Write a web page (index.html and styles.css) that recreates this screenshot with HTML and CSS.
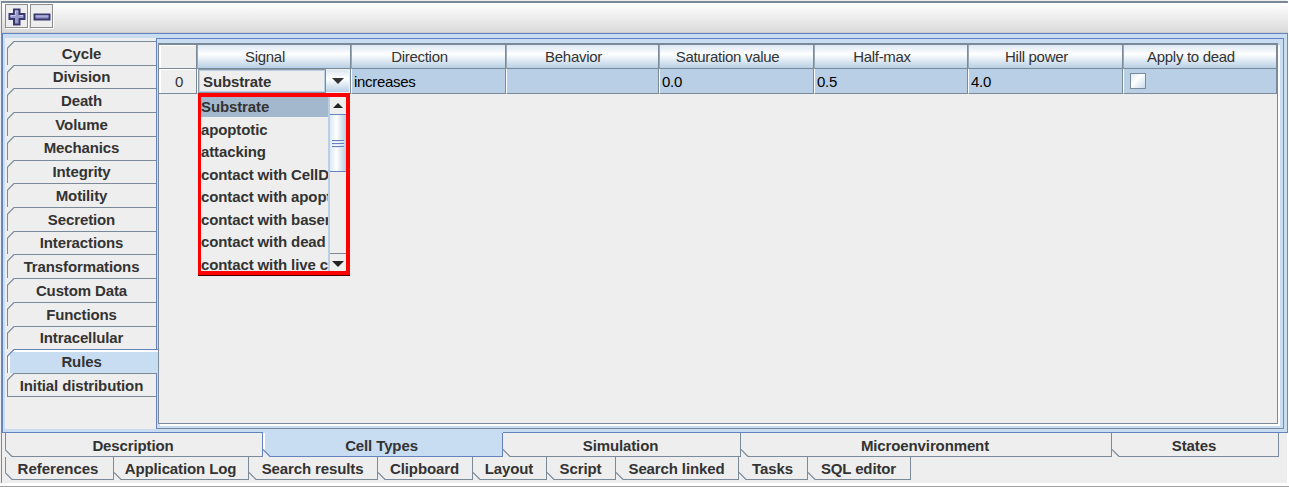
FILE: index.html
```html
<!DOCTYPE html>
<html lang="en">
<head>
<meta charset="utf-8">
<title>Cell Types</title>
<link rel="stylesheet" href="styles.css">
</head>
<body>
<svg class="defs" width="0" height="0">
  <symbol id="cut-top" viewBox="0 0 8 8"><path d="M0 0H8L0 8Z" fill="#eee"/><path d="M8 .5H7L.5 7V8" fill="none" stroke="currentColor" stroke-width="1.2"/></symbol>
  <symbol id="cut-bottom" viewBox="0 0 8 8"><path d="M0 0L8 8H0Z" fill="#eee"/><path d="M0 .5L7 7.5H8" fill="none" stroke="currentColor" stroke-width="1.2"/></symbol>
</svg>
<div class="window">
  <header class="toolbar">
    <button class="tool"><svg width="18" height="18" viewBox="0 0 18 18"><path d="M6 1.5h5.5v4.5h5v5h-5v5.500H6V11H1.500V6H6z" fill="#9a9bcb" stroke="#38386f" stroke-width="2"/><path d="M7.500 6.500V3h2.500M3 9V7.500h4.500M12 7.500h3" fill="none" stroke="#c9caf5" stroke-width="1.2"/></svg></button>
    <button class="tool"><svg width="18" height="18" viewBox="0 0 18 18"><path d="M1.500 6.500h15v5h-15z" fill="#8f90c0" stroke="#38386f" stroke-width="2"/><path d="M2.500 8h13" fill="none" stroke="#c0c1ee" stroke-width="1.2"/></svg></button>
  </header>
  <main class="pane">
    <nav class="side">
      <div class="stab"><svg><use href="#cut-top"/></svg>Cycle</div>
      <div class="stab"><svg><use href="#cut-top"/></svg>Division</div>
      <div class="stab"><svg><use href="#cut-top"/></svg>Death</div>
      <div class="stab"><svg><use href="#cut-top"/></svg>Volume</div>
      <div class="stab"><svg><use href="#cut-top"/></svg>Mechanics</div>
      <div class="stab"><svg><use href="#cut-top"/></svg>Integrity</div>
      <div class="stab"><svg><use href="#cut-top"/></svg>Motility</div>
      <div class="stab"><svg><use href="#cut-top"/></svg>Secretion</div>
      <div class="stab"><svg><use href="#cut-top"/></svg>Interactions</div>
      <div class="stab"><svg><use href="#cut-top"/></svg>Transformations</div>
      <div class="stab"><svg><use href="#cut-top"/></svg>Custom Data</div>
      <div class="stab"><svg><use href="#cut-top"/></svg>Functions</div>
      <div class="stab"><svg><use href="#cut-top"/></svg>Intracellular</div>
      <div class="stab active"><svg><use href="#cut-top"/></svg>Rules</div>
      <div class="stab"><svg><use href="#cut-top"/></svg>Initial distribution</div>
    </nav>
    <section class="content">
      <div class="scroll">
        <div class="grid head">
          <div class="corner"></div><div class="th">Signal</div><div class="th">Direction</div><div class="th">Behavior</div><div class="th">Saturation value</div><div class="th">Half-max</div><div class="th">Hill power</div><div class="th">Apply to dead</div>
        </div>
        <div class="grid row">
          <div class="corner num">0</div>
          <div class="td combo"><span class="value">Substrate</span><span class="arrow"><svg width="12" height="6" viewBox="0 0 12 6"><path d="M0 0H12L6 6Z" fill="#333"/></svg></span>
            <div class="popup">
              <ul class="list">
                <li class="sel">Substrate</li><li>apoptotic</li><li>attacking</li><li>contact with CellD</li><li>contact with apopt</li><li>contact with basem</li><li>contact with dead</li><li>contact with live c</li>
              </ul>
              <div class="bar">
                <div class="step up"><svg width="10" height="5" viewBox="0 0 10 5"><path d="M5 0L10 5H0Z" fill="#222"/></svg></div>
                <div class="thumb"><i></i><i></i><i></i></div>
                <div class="step down"><svg width="12" height="6" viewBox="0 0 12 6"><path d="M0 0H12L6 6Z" fill="#222"/></svg></div>
              </div>
            </div>
          </div>
          <div class="td">increases</div><div class="td"></div><div class="td">0.0</div><div class="td">0.5</div><div class="td">4.0</div><div class="td"><span class="check"></span></div>
        </div>
      </div>
    </section>
  </main>
  <nav class="tabs main-tabs">
    <div class="tab"><svg><use href="#cut-bottom"/></svg>Description</div>
    <div class="tab active"><svg><use href="#cut-bottom"/></svg>Cell Types</div>
    <div class="tab"><svg><use href="#cut-bottom"/></svg>Simulation</div>
    <div class="tab"><svg><use href="#cut-bottom"/></svg>Microenvironment</div>
    <div class="tab"><svg><use href="#cut-bottom"/></svg>States</div>
  </nav>
  <nav class="tabs sub-tabs">
    <div class="tab"><svg><use href="#cut-bottom"/></svg>References</div>
    <div class="tab"><svg><use href="#cut-bottom"/></svg>Application Log</div>
    <div class="tab"><svg><use href="#cut-bottom"/></svg>Search results</div>
    <div class="tab"><svg><use href="#cut-bottom"/></svg>Clipboard</div>
    <div class="tab"><svg><use href="#cut-bottom"/></svg>Layout</div>
    <div class="tab"><svg><use href="#cut-bottom"/></svg>Script</div>
    <div class="tab"><svg><use href="#cut-bottom"/></svg>Search linked</div>
    <div class="tab"><svg><use href="#cut-bottom"/></svg>Tasks</div>
    <div class="tab"><svg><use href="#cut-bottom"/></svg>SQL editor</div>
  </nav>
</div>
</body>
</html>
```
FILE: styles.css
```css
* { box-sizing: border-box; }
body {
  margin: 0;
  width: 1289px;
  height: 487px;
  overflow: hidden;
  display: flex;
  flex-direction: column;
  padding-top: 1px;
  background: #eee;
  border-bottom: 1px solid #a0a0a0;
  font: bold 15px/17px "Liberation Sans", Arial, sans-serif;
  letter-spacing: -0.12px;
  color: #333;
  box-shadow: inset 0 -3px #fff, inset -2px 0 #fff;
}
.defs { position: absolute; }
.window {
  width: 1287px;
  height: 482px;
  border-top: 2px solid #7a8a99;
  border-left: 1px solid #7a8a99;
  margin-left: 1px;
}
.toolbar {
  height: 30px;
  display: flex;
  gap: 2px;
  padding: 1px 0 0 3px;
  background: linear-gradient(#fff, #dadada);
  border-bottom: 1px solid #ccc;
}
.tool {
  width: 23px;
  height: 24px;
  padding: 1px 0 0 1px;
  display: flex;
  align-items: center;
  justify-content: center;
  background: #eee;
  border: 1px solid #8c8c8c;
  box-shadow: 1px 1px #fff;
}
.pane {
  height: 400px;
  display: flex;
  background: #c8ddf2;
  border: 1px solid #6382bf;
  border-right-color: #7a8a99;
  padding: 4px 3px 3px 2px;
}
.side {
  width: 151px;
  padding: 3px 0 0 2px;
  background: #eee;
}
.stab {
  position: relative;
  height: 23.72px;
  padding-top: 2.6px;
  padding-right: 1px;
  text-align: center;
  border-left: 1px solid #7a8a99;
  border-top: 1px solid #7a8a99;
  color: #333;
}
.stab:last-child { border-bottom: 1px solid #7a8a99; height: 24.2px; }
.stab svg {
  position: absolute;
  left: -1px;
  top: -1px;
  width: 8px;
  height: 8px;
  color: #7a8a99;
}
.stab.active {
  background: #c8ddf2;
  border-top-color: #6382bf;
  box-shadow: inset 2px 2px #fff;
  margin-right: -2px;
  padding-right: 3px;
  z-index: 1;
}
.stab.active svg { color: #6382bf; }
.content {
  flex: 1;
  border: 1px solid #7a8a99;
  border-left-color: #6382bf;
  border-top-color: #6382bf;
  padding: 4px 2px 2px 1px;
}
.scroll {
  height: 381px;
  background: #eee;
  border: 1px solid #7a8a99;
  border-top-width: 2px;
  box-shadow: 2px 2px #fff;
  margin: 0 3px 2px 0;
}
.grid {
  display: grid;
  grid-template-columns: 38px 154px 155px 153px 155px 154px 155px 154px;
  height: 24px;
  font-weight: normal;
  letter-spacing: -0.3px;
}
.row { height: 25px; }
.grid > div {
  border-bottom: 1px solid #7a8a99;
  border-right: 1px solid #7a8a99;
}
.th {
  padding: 3px 18px 0 0;
  text-align: center;
  border-left: 1px solid #9aa8b5;
  background: linear-gradient(#dde8f3, #fff 40%, #b8cfe5);
}
.corner {
  background: #eee;
  box-shadow: inset 2px 1px #fff;
}
.num {
  padding: 4px 0 0 3px;
  text-align: center;
}
.td {
  background: #b8cfe5;
  border-left: 1px solid #fff;
  padding: 4px 0 0 2px;
  color: #000;
}
.combo {
  position: relative;
  display: flex;
  padding: 1px;
  background: #eee;
  font-weight: bold;
  letter-spacing: -0.12px;
  color: #333;
}
.value {
  width: 126px;
  border: 1px solid #b8cfe5;
  outline: 1px solid #8a99a8;
  outline-offset: 0;
  padding: 2px 0 0 3px;
}
.arrow {
  flex: 1;
  display: flex;
  align-items: center;
  justify-content: center;
  border-left: 1px solid #7a8a99;
  background: linear-gradient(#dde8f3, #fff 40%, #b8cfe5);
}
.popup {
  position: absolute;
  left: 0;
  top: 24px;
  width: 152px;
  height: 182px;
  border: 4px solid #f00;
  border-left-width: 3px;
  box-shadow: 0 1px #400;
  display: flex;
  background: #eee;
  z-index: 2;
}
.list {
  list-style: none;
  margin: 0;
  padding: 0;
  width: 127px;
  overflow: hidden;
  white-space: nowrap;
}
.list li { height: 22.5px; padding-top: 2px; }
.list .sel { background: #a3b8cc; height: 20px; padding-top: 1px; margin-bottom: 1.5px; }
.bar {
  flex: 1;
  display: flex;
  flex-direction: column;
  border-left: 2px solid #b8cfe5;
}
.step {
  display: flex;
  align-items: center;
  justify-content: center;
  height: 17px;
}
.down { margin-top: auto; border-top: 1px solid #7a8a99; height: 18px; padding-top: 3px; }
.thumb {
  height: 58px;
  border: 1px solid #6382bf;
  border-width: 1px 0;
  background: linear-gradient(90deg, #dde8f3, #fff 40%, #b8cfe5);
  display: flex;
  flex-direction: column;
  justify-content: center;
  gap: 2px;
  padding: 0 2px;
}
.thumb i { height: 1px; background: #6382bf; box-shadow: 0 1px #dfe9f7; }
.check {
  display: block;
  width: 16px;
  height: 16px;
  margin-left: 4px;
  border: 1px solid #7a8a99;
  background: linear-gradient(135deg, #dde8f3, #fff 40%, #c8d9ea);
}
.tabs {
  display: grid;
  margin-left: 3px;
}
.main-tabs {
  grid-template-columns: 258px 240px 238px 371px 167px;
  height: 24px;
}
.sub-tabs {
  grid-template-columns: 109px 135px 129px 95px 74px 69px 123px 69px 103px;
  height: 23px;
}
.tab {
  position: relative;
  text-align: center;
  padding: 4px 2px 0 0;
  border-right: 1px solid #7a8a99;
  border-bottom: 1px solid #7a8a99;
}
.tab svg {
  position: absolute;
  left: 0;
  bottom: -1px;
  width: 8px;
  height: 8px;
  color: #7a8a99;
}
.tab:first-child { border-left: 1px solid #7a8a99; }
.tab:first-child svg { left: -1px; }
.main-tabs .tab:first-child { border-right-color: #6382bf; }
.main-tabs .active {
  background: #c8ddf2;
  border-color: #6382bf;
  box-shadow: 0 -1px #c8ddf2, inset 2px 0 #fff;
}
.active svg { color: #6382bf; }
.sub-tabs .tab { padding: 3px 1px 0 0; }
.sub-tabs .tab:first-child { padding-right: 3px; letter-spacing: 0; }
```
